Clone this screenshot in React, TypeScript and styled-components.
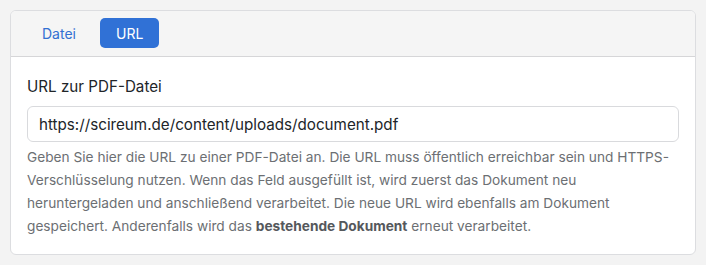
import React, { useState } from 'react'
import styled, { createGlobalStyle } from 'styled-components';

const GlobalStyle = createGlobalStyle`
  html, body {
    margin: 0;
    padding: 0;
    background: #f3f3f3;
    font-family: Inter, "Noto Sans", "Liberation Sans", sans-serif;
    color: #212529;
  }
`

const Page = styled.div`
  padding: 10px;
`

const Card = styled.div`
  background: #fff;
  border: 1px solid #dcdde0;
  border-radius: 6px;
  overflow: hidden;
`

const CardHeader = styled.div`
  background: #f5f5f5;
  border-bottom: 1px solid #d6d6d8;
  padding: 7px 15px 8px;
  display: flex;
  gap: 8px;
`

const Tab = styled.button<{ $active?: boolean }>`
  height: 30px;
  padding: 0 16px;
  border: none;
  border-radius: 5px;
  font-family: inherit;
  font-size: 14px;
  cursor: pointer;
  background: ${p => (p.$active ? '#3071d6' : 'transparent')};
  color: ${p => (p.$active ? '#fff' : '#3270d2')};
`

const CardBody = styled.div`
  padding: 18px 16px 16px;
`

const Label = styled.label`
  display: block;
  font-size: 15.2px;
  line-height: 24px;
  margin-bottom: 7px;
`

const Input = styled.input`
  display: block;
  box-sizing: border-box;
  width: 100%;
  height: 36px;
  padding: 0 11px;
  border: 1px solid #d9dadd;
  border-radius: 6px;
  font-family: inherit;
  font-size: 15.2px;
  color: #212529;
  outline: none;
`

const HelpText = styled.div`
  margin-top: 4px;
  font-size: 13.7px;
  line-height: 23px;
  color: #6c6f73;

  & strong {
    color: #55585c;
    font-weight: 700;
  }
`

const App = () => {
  const [tab, setTab] = useState('url')
  const [url, setUrl] = useState('https://scireum.de/content/uploads/document.pdf')

  return (
    <>
      <GlobalStyle />
      <Page>
        <Card>
          <CardHeader>
            <Tab $active={tab === 'file'} onClick={() => setTab('file')}>Datei</Tab>
            <Tab $active={tab === 'url'} onClick={() => setTab('url')}>URL</Tab>
          </CardHeader>
          <CardBody>
            <Label htmlFor="pdf-url">URL zur PDF-Datei</Label>
            <Input id="pdf-url" value={url} onChange={e => setUrl(e.target.value)} />
            <HelpText>
              Geben Sie hier die URL zu einer PDF-Datei an. Die URL muss öffentlich erreichbar sein und HTTPS-Verschlüsselung nutzen.
              Wenn das Feld ausgefüllt ist, wird zuerst das Dokument neu heruntergeladen und anschließend verarbeitet.
              Die neue URL wird ebenfalls am Dokument gespeichert. Anderenfalls wird das <strong>bestehende Dokument</strong> erneut verarbeitet.
            </HelpText>
          </CardBody>
        </Card>
      </Page>
    </>
  )
}

export default App;
